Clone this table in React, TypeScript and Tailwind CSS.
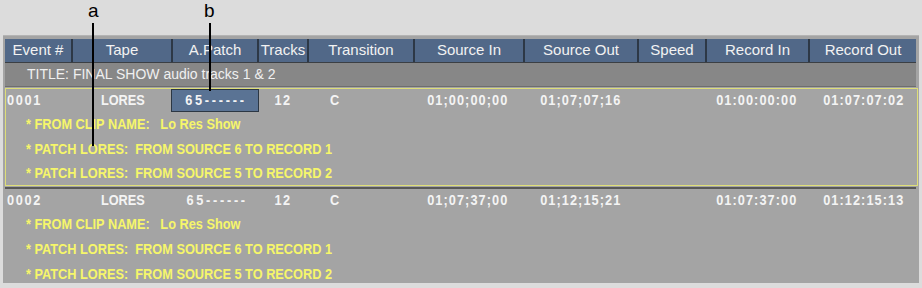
import React from "react";

const cols =
  "grid grid-cols-[66px_100px_86px_50px_106px_110px_114px_68px_103px_108px]";

const headers = [
  "Event #",
  "Tape",
  "A.Patch",
  "Tracks",
  "Transition",
  "Source In",
  "Source Out",
  "Speed",
  "Record In",
  "Record Out",
];

type EventRow = {
  id: string;
  tape: string;
  patch: string;
  tracks: string;
  transition: string;
  srcIn: string;
  srcOut: string;
  recIn: string;
  recOut: string;
  selected?: boolean;
};

const events: EventRow[] = [
  {
    id: "0001",
    tape: "LORES",
    patch: "65------",
    tracks: "12",
    transition: "C",
    srcIn: "01;00;00;00",
    srcOut: "01;07;07;16",
    recIn: "01:00:00:00",
    recOut: "01:07:07:02",
    selected: true,
  },
  {
    id: "0002",
    tape: "LORES",
    patch: "65------",
    tracks: "12",
    transition: "C",
    srcIn: "01;07;37;00",
    srcOut: "01;12;15;21",
    recIn: "01:07:37:00",
    recOut: "01:12:15:13",
  },
];

const comments = [
  "* FROM CLIP NAME:   Lo Res Show",
  "* PATCH LORES:  FROM SOURCE 6 TO RECORD 1",
  "* PATCH LORES:  FROM SOURCE 5 TO RECORD 2",
];

// the console font is narrow, so squeeze the bold face a bit
function Narrow({
  children,
  center,
  className = "",
}: {
  children: React.ReactNode;
  center?: boolean;
  className?: string;
}) {
  return (
    <span
      className={`inline-block scale-x-85 whitespace-pre ${
        center ? "origin-center" : "origin-left"
      } ${className}`}
    >
      {children}
    </span>
  );
}

function Cell({
  children,
  className = "",
}: {
  children: React.ReactNode;
  className?: string;
}) {
  return (
    <div className={`flex justify-center ${className}`}>
      <Narrow center>{children}</Narrow>
    </div>
  );
}

function EventBlock({
  ev,
  mainH,
  subH,
}: {
  ev: EventRow;
  mainH: string;
  subH: string[];
}) {
  return (
    <div className="flex flex-col font-['Liberation_Sans',sans-serif] text-[15px] font-bold">
      <div className={`${cols} ${mainH} items-center text-[#f4f4f4]`}>
        <div className="pl-[2px]">
          <Narrow className="tracking-[2px]">{ev.id}</Narrow>
        </div>
        <Cell className="pl-[3px]">{ev.tape}</Cell>
        <div className="flex items-center">
          {ev.selected ? (
            <div className="flex h-[23px] w-[88px] shrink-0 items-center justify-center border border-[#2c3744] bg-[#5a7394]">
              <Narrow center className="pl-[3px] tracking-[3.2px]">
                {ev.patch}
              </Narrow>
            </div>
          ) : (
            <Cell className="w-full pl-[6px] tracking-[3.2px]">{ev.patch}</Cell>
          )}
        </div>
        <Cell className="pl-[2px] tracking-[1.6px]">{ev.tracks}</Cell>
        <div className="pl-[23px]">
          <Narrow>{ev.transition}</Narrow>
        </div>
        <Cell className="tracking-[1.25px]">{ev.srcIn}</Cell>
        <Cell className="pl-[2px] tracking-[1.25px]">{ev.srcOut}</Cell>
        <span />
        <Cell className="tracking-[1.25px]">{ev.recIn}</Cell>
        <Cell className="pl-[3px] tracking-[1.25px]">{ev.recOut}</Cell>
      </div>
      {comments.map((c, i) => (
        <div
          key={i}
          className={`flex ${subH[i]} items-center pl-[21px] text-[#f6f66a]`}
        >
          <Narrow>{c}</Narrow>
        </div>
      ))}
    </div>
  );
}

export default function App() {
  return (
    <div className="relative h-[288px] w-[922px] overflow-hidden bg-[#dcdcdc] font-['Liberation_Sans',sans-serif]">
      <div className="pt-[35px] pl-[3px]">
        <div className="h-[248px] w-[916px] overflow-hidden border-t border-[#b4b4b4] bg-[#a4a4a4] pt-[3px] pl-[2px] pr-[3px]">
          <div
            className={`${cols} h-[24px] border-b border-[#3b3f44] bg-[#516888] text-[15px] text-[#f2f2f2]`}
          >
            {headers.map((h, i) => (
              <div
                key={h}
                className={`flex items-center justify-center ${
                  i > 0 ? "border-l-2 border-[#2d3846]" : ""
                }`}
              >
                {h}
              </div>
            ))}
          </div>
          <div className="flex h-[24px] items-center border-b border-[#6e6e6e] bg-[#878787] pl-[22px] text-[14px] text-[#f0f0f0]">
            TITLE: FINAL SHOW audio tracks 1 &amp; 2
          </div>
          <div className="mt-[1px] -mr-[2px] border border-[#dede78]">
            <div className="-ml-[1px]">
              <EventBlock
                ev={events[0]}
                mainH="h-[23px]"
                subH={["h-[25px]", "h-[24px]", "h-[24px]"]}
              />
            </div>
          </div>
          <div className="mt-[1px] h-[2px] bg-[#575757]" />
          <div className="-mt-[1px]">
            <EventBlock
              ev={events[1]}
              mainH="h-[24px]"
              subH={["h-[25px]", "h-[25px]", "h-[25px]"]}
            />
          </div>
        </div>
      </div>

      {/* callout labels */}
      <span className="absolute left-[88px] top-0 text-[19px] leading-[22px] text-black">
        a
      </span>
      <span className="absolute left-[92px] top-[23px] h-[123px] w-[2px] bg-black" />
      <span className="absolute left-[204px] top-0 text-[19px] leading-[22px] text-black">
        b
      </span>
      <span className="absolute left-[209px] top-[23px] h-[68px] w-[2px] bg-black" />
    </div>
  );
}
